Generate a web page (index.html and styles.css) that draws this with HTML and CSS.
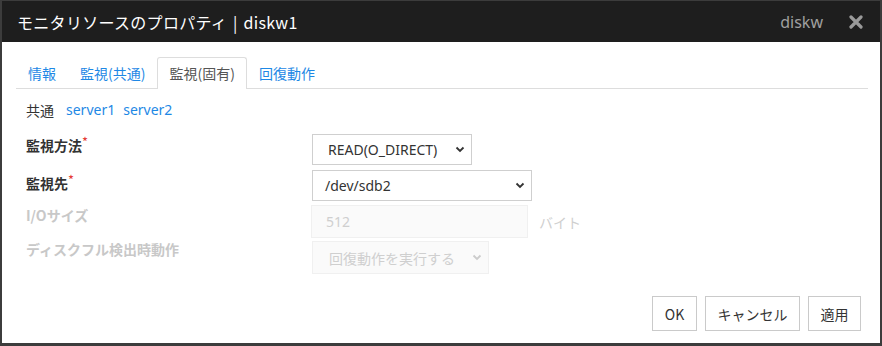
FILE: index.html
```html
<!DOCTYPE html>
<html lang="ja">
<head>
<meta charset="utf-8">
<link rel="stylesheet" href="styles.css">
</head>
<body>
<div class="dialog">
  <div class="header">
    <div class="title">モニタリソースのプロパティ | diskw1</div>
    <div class="hright">
      <span class="type">diskw</span>
      <svg class="close" width="14" height="14" viewBox="0 0 14 14"><path d="M2 2 L12 12 M12 2 L2 12" stroke="#9a9a9a" stroke-width="3.2" stroke-linecap="round"/></svg>
    </div>
  </div>
  <div class="body">
    <div class="tabs">
      <a class="tab">情報</a>
      <a class="tab">監視(共通)</a>
      <a class="tab active">監視(固有)</a>
      <a class="tab">回復動作</a>
    </div>
    <div class="servers">
      <span class="common">共通</span>
      <a class="srv">server1</a>
      <a class="srv">server2</a>
    </div>
    <div class="form">
      <div class="row r1">
        <div class="label">監視方法<span class="req">*</span></div>
        <div class="field"><div class="select s1"><span>READ(O_DIRECT)</span><svg class="chev" width="10" height="7" viewBox="0 0 10 7"><path d="M1.5 1.5 L5 5 L8.5 1.5" stroke="#333" stroke-width="1.8" fill="none"/></svg></div></div>
      </div>
      <div class="row r2">
        <div class="label">監視先<span class="req">*</span></div>
        <div class="field"><div class="select s2"><span>/dev/sdb2</span><svg class="chev" width="10" height="7" viewBox="0 0 10 7"><path d="M1.5 1.5 L5 5 L8.5 1.5" stroke="#333" stroke-width="1.8" fill="none"/></svg></div></div>
      </div>
      <div class="row r3 dis">
        <div class="label">I/Oサイズ</div>
        <div class="field"><div class="input">512</div><span class="unit">バイト</span></div>
      </div>
      <div class="row r4 dis">
        <div class="label">ディスクフル検出時動作</div>
        <div class="field"><div class="select s3 disabled"><span>回復動作を実行する</span><svg class="chev" width="10" height="7" viewBox="0 0 10 7"><path d="M1.5 1.5 L5 5 L8.5 1.5" stroke="#ccc" stroke-width="1.8" fill="none"/></svg></div></div>
      </div>
    </div>
    <div class="buttons">
      <button class="btn b-ok">OK</button>
      <button class="btn b-cancel">キャンセル</button>
      <button class="btn b-apply">適用</button>
    </div>
  </div>
</div>
</body>
</html>
```

FILE: styles.css
```css
html, body {
  margin: 0;
  padding: 0;
  background: #3c3c3c;
}
body {
  width: 882px;
  height: 346px;
  padding: 1px 2px 3px 2px;
  box-sizing: border-box;
  font-family: "Noto Sans", "Noto Sans CJK JP", sans-serif;
  font-size: 14px;
  color: #333;
}
.dialog {
  width: 878px;
  height: 342px;
  background: #fff;
  display: flex;
  flex-direction: column;
}
.header {
  height: 41px;
  background: #1e1e1e;
  display: flex;
  align-items: center;
  justify-content: space-between;
  padding: 0 17px 0 15px;
  flex: none;
}
.title {
  color: #fff;
  font-size: 16px;
  font-family: "Noto Sans CJK JP", "Noto Sans", sans-serif;
  letter-spacing: 0.3px;
  word-spacing: 2px;
}
.hright {
  display: flex;
  align-items: center;
  gap: 26px;
}
.type {
  color: #a0a0a0;
  font-size: 16px;
}
.close { display: block; }
.body {
  flex: 1;
  padding: 0 12px 0 14px;
  display: flex;
  flex-direction: column;
}
.tabs {
  display: flex;
  margin-top: 15px;
  border-bottom: 1px solid #dddddd;
  height: 31px;
}
.tab {
  color: #1e88e5;
  padding: 0 11px;
  line-height: 31px;
  font-family: "Noto Sans CJK JP", sans-serif;
  border: 1px solid transparent;
  border-bottom: none;
  border-radius: 3px 3px 0 0;
  box-sizing: border-box;
  margin-bottom: -1px;
  height: 32px;
}
.tab.active {
  color: #555;
  background: #fff;
  border-color: #dddddd;
}
.servers {
  margin-top: 11px;
  padding-left: 10px;
  height: 20px;
  line-height: 20px;
  display: flex;
  gap: 8px;
}
.common { margin-right: 4px; font-family: "Noto Sans CJK JP", sans-serif; }
.srv { color: #1e88e5; }
.form {
  margin-top: 14px;
  display: flex;
  flex-direction: column;
}
.row {
  display: flex;
  align-items: flex-start;
}
.r2 { margin-top: 5px; }
.r3 { margin-top: 4px; }
.r4 { margin-top: 3px; }
.label {
  width: 286px;
  padding-left: 10px;
  font-weight: bold;
  font-family: "Noto Sans CJK JP", sans-serif;
  color: #333;
  line-height: 20px;
}
.r1 .label { margin-top: -2px; }
.r2 .label { margin-top: 0; }
.r3 .label { margin-top: 0; }
.r4 .label { margin-top: -2px; }
.req { color: #e53935; font-weight: normal; vertical-align: 4px; font-size: 13px; }
.dis .label { color: #c8c8c8; }
.field {
  display: flex;
  align-items: center;
}
.select {
  height: 31px;
  border: 1px solid #cfcfcf;
  box-sizing: border-box;
  display: flex;
  align-items: center;
  justify-content: space-between;
  padding: 0 6px 0 12px;
  background: #fff;
}
.s1 { width: 160px; padding-left: 15px; }
.s2 { width: 220px; }
.s3 { width: 177px; height: 33px; }
.select.disabled { background: #fafafa; border-color: #f0f0f0; color: #cfcfcf; padding-left: 16px; }
.chev { display: block; }
.input {
  width: 217px;
  height: 33px;
  box-sizing: border-box;
  background: #fafafa;
  border: 1px solid #f0f0f0;
  color: #cfcfcf;
  padding-left: 14px;
  line-height: 31px;
  margin-left: -1px;
}
.unit { margin-left: 11px; color: #cfcfcf; font-family: "Noto Sans CJK JP", sans-serif; }
.buttons {
  margin-top: auto;
  margin-bottom: 12px;
  display: flex;
  justify-content: flex-end;
  gap: 8px;
  padding-right: 7px;
}
.btn {
  height: 35px;
  border: 1px solid #cacaca;
  background: #fff;
  font-family: "Noto Sans CJK JP", sans-serif;
  font-size: 14px;
  color: #333;
  padding: 0;
  box-sizing: border-box;
}
.b-ok { width: 45px; }
.b-cancel { width: 95px; }
.b-apply { width: 53px; }
```
